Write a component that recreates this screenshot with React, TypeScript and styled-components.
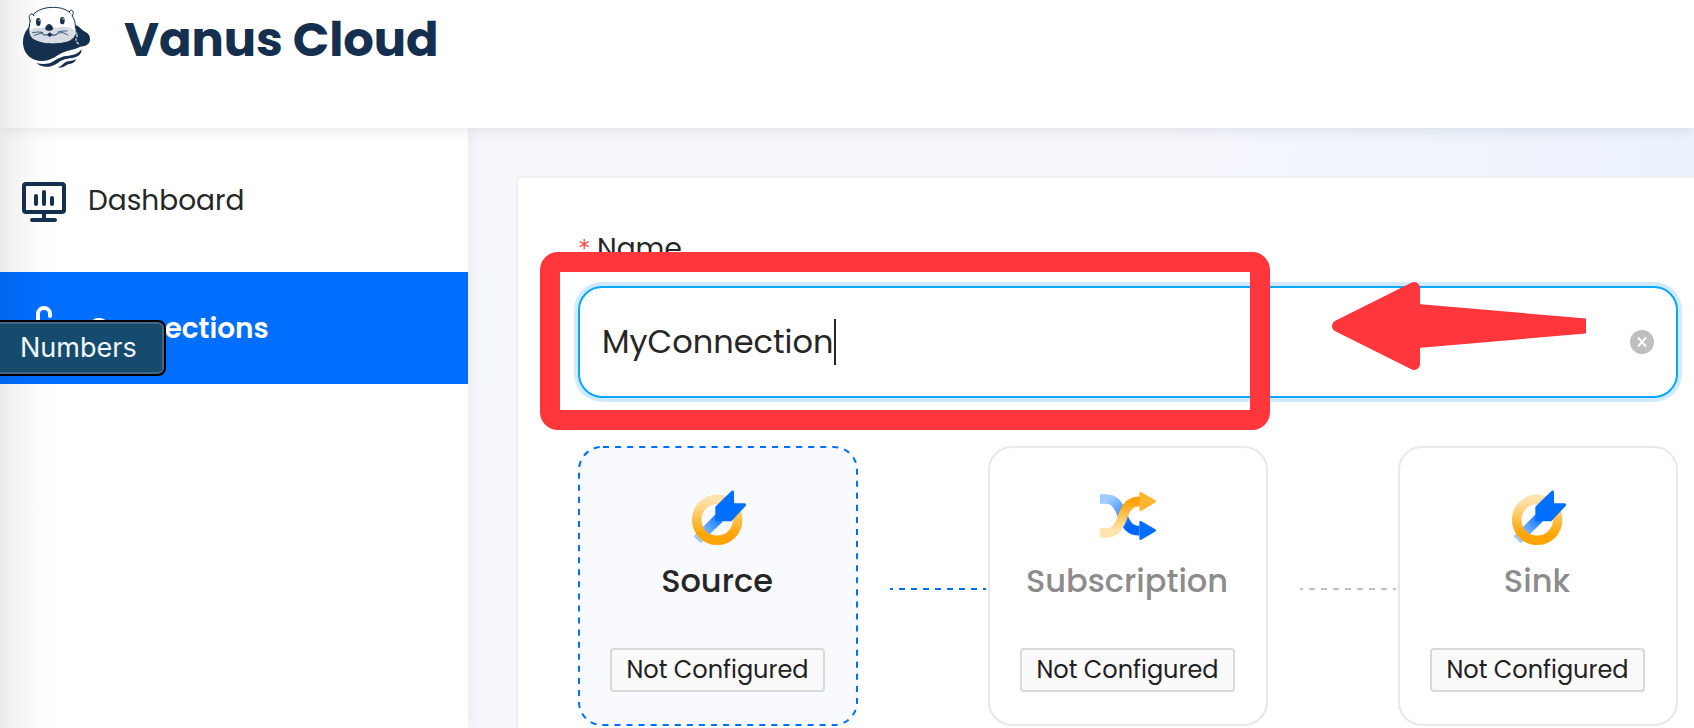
import React from 'react';
import styled, { createGlobalStyle } from 'styled-components';

const GlobalStyle = createGlobalStyle`
  * { box-sizing: border-box; }
  html, body { margin: 0; padding: 0; overflow: hidden; }
  body { font-family: Poppins, Inter, "Liberation Sans", sans-serif; color: #262626; background: #fff; }
  svg { display: block; flex: none; overflow: visible; }
`;

const navy = '#15304f';

const Page = styled.div`
  position: relative;
  width: 1694px;
  height: 728px;
  overflow: hidden;
  display: flex;
  flex-direction: column;
`;

const Header = styled.header`
  position: relative;
  z-index: 2;
  height: 128px;
  flex: none;
  display: flex;
  align-items: flex-start;
  gap: 33px;
  padding: 6px 0 0 22px;
  background: #fff;
  box-shadow: 0 2px 14px rgba(10, 40, 50, 0.1);
`;

const Brand = styled.h1`
  margin: 4px 0 0;
  font-size: 48px;
  line-height: 60px;
  font-weight: 700;
  letter-spacing: -0.1px;
  color: ${navy};
`;

const Body = styled.div`
  flex: 1;
  min-height: 0;
  display: flex;
`;

const Sidebar = styled.nav`
  position: relative;
  z-index: 1;
  width: 468px;
  flex: none;
  display: flex;
  flex-direction: column;
  gap: 16px;
  padding-top: 16px;
  background: #fff;
  box-shadow: 2px 0 14px rgba(30, 30, 50, 0.06);
`;

const NavItem = styled.a<{ $active?: boolean }>`
  height: 112px;
  display: flex;
  align-items: center;
  gap: 22px;
  padding: 4px 0 0 22px;
  font-size: 28px;
  line-height: 44px;
  font-weight: ${p => (p.$active ? 600 : 400)};
  color: ${p => (p.$active ? '#fff' : '#262626')};
  background: ${p => (p.$active ? '#006eff' : 'transparent')};
`;

const NavText = styled.span`
  margin-top: -2px;
`;

const Main = styled.main`
  flex: 1;
  min-width: 0;
  padding: 48px 0 0 48px;
  background: linear-gradient(100deg, #f6f7fc 0, #f6f7fc 52%, #f2f5fd 64%, #eef3fc 78%, #ebf1fd 100%);
`;

const Panel = styled.section`
  width: 1240px;
  height: 640px;
  padding: 55px 60px 0;
  border: 2px solid #f0f0f0;
  border-radius: 4px;
  background: #fff;
`;

const Label = styled.label`
  display: flex;
  gap: 8px;
  height: 32px;
  line-height: 32px;
  font-size: 28px;
`;

const Required = styled.span`
  width: 11px;
  font-family: Inter, "Liberation Sans", sans-serif;
  font-size: 25px;
  font-weight: 300;
  color: #ff4d4f;
`;

const InputBox = styled.div`
  width: 1100px;
  height: 112px;
  margin-top: 21px;
  padding: 0 22px;
  display: flex;
  align-items: center;
  border: 2px solid #05a8ff;
  border-radius: 24px;
  background: #fff;
  box-shadow: 0 0 0 4px #d1eaff;
`;

const InputValue = styled.span`
  font-size: 32px;
`;

const Caret = styled.i`
  width: 2px;
  height: 46px;
  margin-left: 1px;
  background: #262626;
`;

const Clear = styled.svg`
  margin-left: auto;
`;

const Steps = styled.div`
  display: flex;
  width: 1100px;
  margin-top: 48px;
`;

const Step = styled.article<{ $active?: boolean }>`
  position: relative;
  width: 280px;
  height: 280px;
  flex: none;
  padding-top: 42px;
  display: flex;
  flex-direction: column;
  align-items: center;
  border: 2px solid ${p => (p.$active ? 'transparent' : '#e8e8e8')};
  border-radius: 24px;
  background: ${p => (p.$active ? '#f9faff' : '#fff')};
  color: ${p => (p.$active ? '#262626' : '#8c8c8c')};
`;

const DashedOutline = styled.svg`
  position: absolute;
  left: -2px;
  top: -2px;
`;

const StepTitle = styled.h2`
  margin: 11px 2px 0 0;
  height: 48px;
  line-height: 48px;
  font-size: 32px;
  font-weight: 500;
`;

const Tag = styled.span`
  width: 215px;
  height: 44px;
  margin: 43px 1px 0 0;
  line-height: 40px;
  text-align: center;
  font-size: 24px;
  color: #1f2124;
  border: 2px solid #d9d9d9;
  border-radius: 4px;
  background: #fafafa;
`;

const Link = styled.div<{ $color: string }>`
  width: 96px;
  height: 2px;
  margin: 142px 2px 0 32px;
  background: repeating-linear-gradient(90deg, ${p => p.$color} 0 6px, transparent 6px 12px) -3px 0 / 108px 2px;
`;

const EdgeShade = styled.div`
  position: absolute;
  z-index: 4;
  inset: 0 auto 0 0;
  width: 60px;
  background: linear-gradient(90deg, rgba(0, 0, 0, 0.08), rgba(0, 0, 0, 0.043) 26%, rgba(0, 0, 0, 0.01) 65%, transparent);
`;

const DockTip = styled.div`
  position: absolute;
  z-index: 5;
  left: -10px;
  top: 320px;
  width: 176px;
  height: 56px;
  padding-left: 28px;
  line-height: 52px;
  font-family: Inter, "Liberation Sans", sans-serif;
  font-size: 27px;
  color: #f2f8fc;
  background: #164b6e;
  border: 2px solid #000;
  border-radius: 8px;
  box-shadow: inset 0 0 0 2px #426788;
`;

const Highlight = styled.div`
  position: absolute;
  z-index: 3;
  left: 540px;
  top: 252px;
  width: 730px;
  height: 178px;
  border: 20px solid #ff363b;
  border-radius: 18px;
`;

const Arrow = styled.svg`
  position: absolute;
  z-index: 3;
  left: 1332px;
  top: 282px;
`;

function OtterLogo() {
  return (
    <svg width="69" height="63" viewBox="66 18 207 189" fill="none" strokeLinecap="round">
      <path fill={navy} d="M88 80C70 98 67 120 70 138C74 166 98 183 126 183C152 183 166 170 184 160C204 149 222 151 240 140C260 140 270 131 270 118C270 106 264 99 255 95C244 90 240 80 228 76Z" />
      <path fill="#fff" stroke={navy} strokeWidth="3" d="M88 78C88 68 92 58 97 47C109 30 134 22 160 22C184 22 202 29 215 43C221 55 227 67 226 80C233 101 224 116 206 124C180 134 133 134 108 122C91 114 83 98 88 78Z" />
      <path fill="#d7dde5" d="M89 96C94 84 112 81 126 85C137 78 158 77 170 84C189 77 214 80 224 92C226 108 216 118 205 123C180 132 133 132 109 121C95 115 89 106 89 96Z" />
      <path stroke={navy} strokeWidth="3" fill="#fff" d="M91 63C85 54 88 43 93 42C98 41 101 44 101 47M208 35C208 30 215 29 218 33C221 38 220 44 217 48" />
      <ellipse cx="115" cy="66" rx="7" ry="12" fill={navy} />
      <ellipse cx="187" cy="62" rx="7" ry="11" fill={navy} />
      <circle cx="117" cy="61" r="2" fill="#fff" />
      <circle cx="189" cy="57" r="2" fill="#fff" />
      <path fill={navy} d="M147 72C153 72 160 81 159 87C156 94 138 94 136 87C135 81 142 72 147 72Z" />
      <path fill={navy} d="M149 97L158 104L149 111L141 104Z" />
      <path stroke={navy} strokeWidth="3" d="M126 101C134 108 141 105 149 102C158 107 166 107 173 101" />
      <path stroke={navy} strokeWidth="2.2" d="M98 98L113 96L127 97M103 106L128 98M174 96L189 93L201 93M174 99L189 98L204 105" />
      <path stroke="#d7dde5" strokeWidth="4" d="M231 104V110M228 117V121M231 127L235 131M226 101L230 99" />
      <path fill={navy} d="M109 189C128 194 146 192 158 185C174 175 186 168 206 167C226 165 238 158 244 148C247 160 236 172 216 174C196 176 184 180 170 191C150 205 122 202 109 189Z" />
      <path fill={navy} d="M175 202C186 199 190 187 204 184C214 182 222 182 229 177C226 187 217 190 208 192C198 194 192 204 175 203Z" />
    </svg>
  );
}

function DashboardIcon() {
  return (
    <svg width="44" height="40" viewBox="0 0 44 40" fill="none" stroke={navy} strokeWidth="4" strokeLinecap="round">
      <rect x="2" y="2" width="40" height="28" rx="2" />
      <path d="M14 14V22M22 10V22M30 16V22M22 31V37M10 38H33" />
    </svg>
  );
}

function ConnectionsIcon() {
  return (
    <svg width="44" height="44" viewBox="0 0 44 44" fill="none" stroke="#fff" strokeWidth="4" strokeLinecap="round">
      <path d="M16 26V6A6 6 0 0 1 28 6V8" />
      <path d="M28 24V34A6 6 0 0 1 16 34" />
    </svg>
  );
}

function PlugIcon({ id }: { id: string }) {
  return (
    <svg width="56" height="56" viewBox="390 180 168 168">
      <defs>
        <linearGradient id={`${id}-ring`} x1="0" y1="195" x2="0" y2="345" gradientUnits="userSpaceOnUse">
          <stop offset="0.1" stopColor="#ffe3ad" />
          <stop offset="0.8" stopColor="#ffa400" />
        </linearGradient>
        <linearGradient id={`${id}-rod`} x1="412" y1="326" x2="482" y2="260" gradientUnits="userSpaceOnUse">
          <stop offset="0.1" stopColor="#9fcbff" />
          <stop offset="1" stopColor="#0a72ff" />
        </linearGradient>
      </defs>
      <path d="M466 254L487 275L422 340L401 319Z" fill={`url(#${id}-rod)`} />
      <circle cx="471.500" cy="269.500" r="61.500" fill="none" stroke={`url(#${id}-ring)`} strokeWidth="28.500" />
      <path d="M466 254L487 275L447 311Q436 304 430 292Z" fill={`url(#${id}-rod)`} />
      <path d="M515 185L468 231V272H513L556 226Q557 222 553 222H520V186Q518 182 515 185Z" fill="#006eff" stroke="#006eff" strokeWidth="4" strokeLinejoin="round" />
    </svg>
  );
}

function ShuffleIcon() {
  return (
    <svg width="56" height="56" viewBox="390 180 168 168" fill="none" strokeLinejoin="round">
      <defs>
        <linearGradient id="cool" x1="405" y1="200" x2="490" y2="300" gradientUnits="userSpaceOnUse">
          <stop offset="0.1" stopColor="#9fcbff" />
          <stop offset="0.85" stopColor="#0066ff" />
        </linearGradient>
        <linearGradient id="warm" x1="0" y1="214" x2="0" y2="309" gradientUnits="userSpaceOnUse">
          <stop offset="0" stopColor="#ffa200" />
          <stop offset="0.9" stopColor="#ffe3ad" />
        </linearGradient>
      </defs>
      <path d="M390 207H408C436 207 447 229 457 255C467 283 478 302 508 302" stroke="url(#cool)" strokeWidth="29" />
      <path d="M390 309H408C438 309 449 286 459 257C469 230 480 214 510 214" stroke="url(#warm)" strokeWidth="29" />
      <path d="M512 190L554 214L512 239Z" fill="#ffb52e" stroke="#ffb52e" strokeWidth="8" />
      <path d="M512 277L554 301L512 326Z" fill="#006eff" stroke="#006eff" strokeWidth="8" />
    </svg>
  );
}

export default function App() {
  return (
    <Page>
      <GlobalStyle />
      <Header>
        <OtterLogo />
        <Brand>Vanus Cloud</Brand>
      </Header>
      <Body>
        <Sidebar>
          <NavItem><DashboardIcon /><NavText>Dashboard</NavText></NavItem>
          <NavItem $active><ConnectionsIcon /><NavText>Connections</NavText></NavItem>
        </Sidebar>
        <Main>
          <Panel>
            <Label><Required>*</Required>Name</Label>
            <InputBox>
              <InputValue>MyConnection</InputValue>
              <Caret />
              <Clear width="24" height="24" viewBox="0 0 24 24">
                <circle cx="12" cy="12" r="12" fill="#bfbfbf" />
                <path d="M8 7.500L16 16.500M16 7.500L8 16.500" stroke="#fff" strokeWidth="1.900" />
              </Clear>
            </InputBox>
            <Steps>
              <Step $active>
                <DashedOutline width="280" height="280" viewBox="0 0 280 280" fill="none" stroke="#006eff" strokeWidth="2" strokeDasharray="6.035 6.035" strokeDashoffset="-1">
                  <rect x="1" y="1" width="278" height="278" rx="23" />
                </DashedOutline>
                <PlugIcon id="source" />
                <StepTitle>Source</StepTitle>
                <Tag>Not Configured</Tag>
              </Step>
              <Link $color="#006eff" />
              <Step>
                <ShuffleIcon />
                <StepTitle>Subscription</StepTitle>
                <Tag>Not Configured</Tag>
              </Step>
              <Link $color="#bfbfbf" />
              <Step>
                <PlugIcon id="sink" />
                <StepTitle>Sink</StepTitle>
                <Tag>Not Configured</Tag>
              </Step>
            </Steps>
          </Panel>
        </Main>
      </Body>
      <Highlight />
      <Arrow width="254" height="88" viewBox="0 0 254 88" fill="#ff363b">
        <path d="M6 44L82 6V82Z" stroke="#ff363b" strokeWidth="12" strokeLinejoin="round" />
        <path d="M86 22L254 36.500V51.500L86 66Z" />
      </Arrow>
      <EdgeShade />
      <DockTip>Numbers</DockTip>
    </Page>
  );
}
